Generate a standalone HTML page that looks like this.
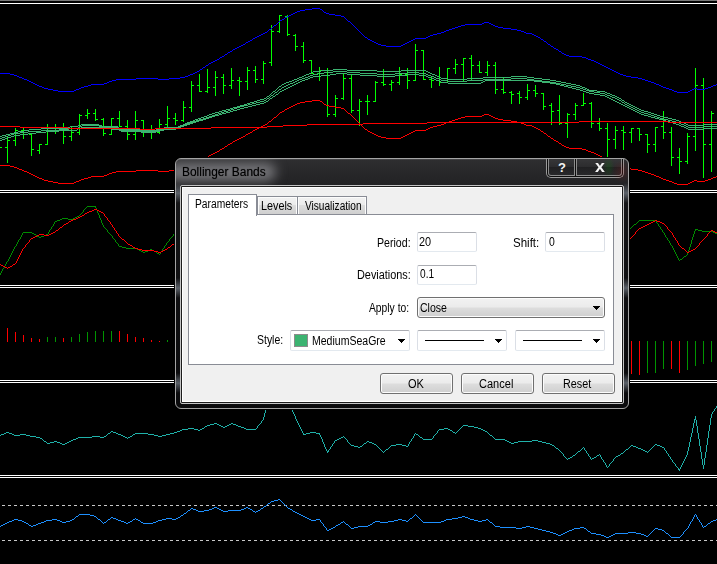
<!DOCTYPE html><html><head><meta charset="utf-8"><title>Bollinger Bands</title><style>
html,body{margin:0;padding:0;background:#000;}
body{width:717px;height:564px;position:relative;overflow:hidden;font-family:"Liberation Sans",sans-serif;}
.a{position:absolute;box-sizing:border-box;}
#chart{position:absolute;left:0;top:0;}
.t{position:absolute;line-height:20px;height:20px;white-space:nowrap;color:#000;transform-origin:0 0;}
.inp{position:absolute;box-sizing:border-box;background:#fff;border-radius:2px;border:1px solid #e3e9ef;border-top-color:#abadb3;border-left-color:#dbdfe6;border-right-color:#dbdfe6;}
.btn{position:absolute;box-sizing:border-box;border:1px solid #707070;border-radius:3px;background:linear-gradient(to bottom,#f2f2f2 0,#ebebeb 48%,#dddddd 52%,#cfcfcf 100%);box-shadow:inset 0 0 0 1px #fcfcfc;}
.tab{position:absolute;box-sizing:border-box;border:1px solid #898c95;border-bottom:none;background:linear-gradient(to bottom,#f2f2f2 0,#ebebeb 50%,#dddddd 50%,#cfcfcf 100%);box-shadow:inset 1px 1px 0 0 #fcfcfc, inset -1px 0 0 0 #fcfcfc;}
.arrow{position:absolute;width:0;height:0;border-left:3.5px solid transparent;border-right:3.5px solid transparent;border-top:4px solid #000;}
</style></head><body>
<svg id="chart" width="717" height="564" viewBox="0 0 717 564" shape-rendering="crispEdges">
<rect x="0" y="0" width="717" height="564" fill="#000"/>
<rect x="0" y="0" width="717" height="1" fill="#787878"/>
<rect x="0" y="3" width="717" height="1" fill="#fff"/>
<rect x="0" y="190" width="717" height="1" fill="#fff"/>
<rect x="0" y="192" width="717" height="1" fill="#fff"/>
<rect x="0" y="285" width="717" height="1" fill="#fff"/>
<rect x="0" y="287" width="717" height="1" fill="#fff"/>
<rect x="0" y="380" width="717" height="1" fill="#fff"/>
<rect x="0" y="382" width="717" height="1" fill="#fff"/>
<rect x="0" y="475" width="717" height="1" fill="#fff"/>
<rect x="0" y="477" width="717" height="1" fill="#fff"/>
<line x1="2" y1="505.5" x2="717" y2="505.5" stroke="#c8c8c8" stroke-width="1" stroke-dasharray="3 3"/>
<line x1="2" y1="540.5" x2="717" y2="540.5" stroke="#c8c8c8" stroke-width="1" stroke-dasharray="3 3"/>
<clipPath id="c1"><rect x="0" y="4" width="717" height="186"/></clipPath><g clip-path="url(#c1)">
<rect x="0" y="147" width="2" height="1" fill="#0f0"/><rect x="7" y="136" width="1" height="27" fill="#0f0"/><rect x="5" y="147" width="2" height="1" fill="#0f0"/><rect x="8" y="140" width="2" height="1" fill="#0f0"/><rect x="15" y="128" width="1" height="18" fill="#0f0"/><rect x="13" y="140" width="2" height="1" fill="#0f0"/><rect x="16" y="130" width="2" height="1" fill="#0f0"/><rect x="23" y="128" width="1" height="11" fill="#0f0"/><rect x="21" y="130" width="2" height="1" fill="#0f0"/><rect x="24" y="132" width="2" height="1" fill="#0f0"/><rect x="31" y="134" width="1" height="22" fill="#0f0"/><rect x="29" y="134" width="2" height="1" fill="#0f0"/><rect x="32" y="149" width="2" height="1" fill="#0f0"/><rect x="39" y="144" width="1" height="10" fill="#0f0"/><rect x="37" y="150" width="2" height="1" fill="#0f0"/><rect x="40" y="144" width="2" height="1" fill="#0f0"/><rect x="47" y="124" width="1" height="21" fill="#0f0"/><rect x="45" y="144" width="2" height="1" fill="#0f0"/><rect x="48" y="131" width="2" height="1" fill="#0f0"/><rect x="55" y="124" width="1" height="10" fill="#0f0"/><rect x="53" y="131" width="2" height="1" fill="#0f0"/><rect x="56" y="130" width="2" height="1" fill="#0f0"/><rect x="63" y="123" width="1" height="21" fill="#0f0"/><rect x="61" y="130" width="2" height="1" fill="#0f0"/><rect x="64" y="136" width="2" height="1" fill="#0f0"/><rect x="71" y="126" width="1" height="15" fill="#0f0"/><rect x="69" y="136" width="2" height="1" fill="#0f0"/><rect x="72" y="132" width="2" height="1" fill="#0f0"/><rect x="79" y="114" width="1" height="21" fill="#0f0"/><rect x="77" y="132" width="2" height="1" fill="#0f0"/><rect x="80" y="115" width="2" height="1" fill="#0f0"/><rect x="87" y="109" width="1" height="10" fill="#0f0"/><rect x="85" y="115" width="2" height="1" fill="#0f0"/><rect x="88" y="113" width="2" height="1" fill="#0f0"/><rect x="95" y="109" width="1" height="12" fill="#0f0"/><rect x="93" y="113" width="2" height="1" fill="#0f0"/><rect x="96" y="119" width="2" height="1" fill="#0f0"/><rect x="103" y="118" width="1" height="18" fill="#0f0"/><rect x="101" y="119" width="2" height="1" fill="#0f0"/><rect x="104" y="133" width="2" height="1" fill="#0f0"/><rect x="111" y="118" width="1" height="17" fill="#0f0"/><rect x="109" y="134" width="2" height="1" fill="#0f0"/><rect x="112" y="118" width="2" height="1" fill="#0f0"/><rect x="119" y="111" width="1" height="16" fill="#0f0"/><rect x="117" y="118" width="2" height="1" fill="#0f0"/><rect x="120" y="126" width="2" height="1" fill="#0f0"/><rect x="127" y="120" width="1" height="20" fill="#0f0"/><rect x="125" y="126" width="2" height="1" fill="#0f0"/><rect x="128" y="134" width="2" height="1" fill="#0f0"/><rect x="135" y="111" width="1" height="29" fill="#0f0"/><rect x="133" y="134" width="2" height="1" fill="#0f0"/><rect x="136" y="120" width="2" height="1" fill="#0f0"/><rect x="143" y="120" width="1" height="17" fill="#0f0"/><rect x="141" y="120" width="2" height="1" fill="#0f0"/><rect x="144" y="129" width="2" height="1" fill="#0f0"/><rect x="151" y="125" width="1" height="14" fill="#0f0"/><rect x="149" y="129" width="2" height="1" fill="#0f0"/><rect x="152" y="132" width="2" height="1" fill="#0f0"/><rect x="159" y="119" width="1" height="15" fill="#0f0"/><rect x="157" y="132" width="2" height="1" fill="#0f0"/><rect x="160" y="124" width="2" height="1" fill="#0f0"/><rect x="167" y="106" width="1" height="22" fill="#0f0"/><rect x="165" y="124" width="2" height="1" fill="#0f0"/><rect x="168" y="118" width="2" height="1" fill="#0f0"/><rect x="175" y="113" width="1" height="12" fill="#0f0"/><rect x="173" y="118" width="2" height="1" fill="#0f0"/><rect x="176" y="120" width="2" height="1" fill="#0f0"/><rect x="183" y="101" width="1" height="21" fill="#0f0"/><rect x="181" y="120" width="2" height="1" fill="#0f0"/><rect x="184" y="107" width="2" height="1" fill="#0f0"/><rect x="191" y="81" width="1" height="31" fill="#0f0"/><rect x="189" y="107" width="2" height="1" fill="#0f0"/><rect x="192" y="85" width="2" height="1" fill="#0f0"/><rect x="199" y="74" width="1" height="18" fill="#0f0"/><rect x="197" y="85" width="2" height="1" fill="#0f0"/><rect x="200" y="91" width="2" height="1" fill="#0f0"/><rect x="207" y="69" width="1" height="24" fill="#0f0"/><rect x="205" y="91" width="2" height="1" fill="#0f0"/><rect x="208" y="87" width="2" height="1" fill="#0f0"/><rect x="215" y="71" width="1" height="25" fill="#0f0"/><rect x="213" y="87" width="2" height="1" fill="#0f0"/><rect x="216" y="77" width="2" height="1" fill="#0f0"/><rect x="223" y="74" width="1" height="20" fill="#0f0"/><rect x="221" y="77" width="2" height="1" fill="#0f0"/><rect x="224" y="85" width="2" height="1" fill="#0f0"/><rect x="231" y="68" width="1" height="21" fill="#0f0"/><rect x="229" y="85" width="2" height="1" fill="#0f0"/><rect x="232" y="80" width="2" height="1" fill="#0f0"/><rect x="239" y="77" width="1" height="19" fill="#0f0"/><rect x="237" y="80" width="2" height="1" fill="#0f0"/><rect x="240" y="81" width="2" height="1" fill="#0f0"/><rect x="247" y="67" width="1" height="23" fill="#0f0"/><rect x="245" y="81" width="2" height="1" fill="#0f0"/><rect x="248" y="70" width="2" height="1" fill="#0f0"/><rect x="255" y="66" width="1" height="17" fill="#0f0"/><rect x="253" y="70" width="2" height="1" fill="#0f0"/><rect x="256" y="79" width="2" height="1" fill="#0f0"/><rect x="263" y="61" width="1" height="23" fill="#0f0"/><rect x="261" y="79" width="2" height="1" fill="#0f0"/><rect x="264" y="63" width="2" height="1" fill="#0f0"/><rect x="271" y="25" width="1" height="41" fill="#0f0"/><rect x="269" y="62" width="2" height="1" fill="#0f0"/><rect x="272" y="31" width="2" height="1" fill="#0f0"/><rect x="279" y="15" width="1" height="18" fill="#0f0"/><rect x="277" y="31" width="2" height="1" fill="#0f0"/><rect x="280" y="15" width="2" height="1" fill="#0f0"/><rect x="287" y="15" width="1" height="21" fill="#0f0"/><rect x="285" y="16" width="2" height="1" fill="#0f0"/><rect x="288" y="34" width="2" height="1" fill="#0f0"/><rect x="295" y="34" width="1" height="17" fill="#0f0"/><rect x="293" y="35" width="2" height="1" fill="#0f0"/><rect x="296" y="46" width="2" height="1" fill="#0f0"/><rect x="303" y="42" width="1" height="21" fill="#0f0"/><rect x="301" y="46" width="2" height="1" fill="#0f0"/><rect x="304" y="60" width="2" height="1" fill="#0f0"/><rect x="311" y="60" width="1" height="14" fill="#0f0"/><rect x="309" y="60" width="2" height="1" fill="#0f0"/><rect x="312" y="73" width="2" height="1" fill="#0f0"/><rect x="319" y="67" width="1" height="14" fill="#0f0"/><rect x="317" y="73" width="2" height="1" fill="#0f0"/><rect x="320" y="70" width="2" height="1" fill="#0f0"/><rect x="327" y="68" width="1" height="49" fill="#0f0"/><rect x="325" y="70" width="2" height="1" fill="#0f0"/><rect x="328" y="114" width="2" height="1" fill="#0f0"/><rect x="335" y="95" width="1" height="22" fill="#0f0"/><rect x="333" y="114" width="2" height="1" fill="#0f0"/><rect x="336" y="98" width="2" height="1" fill="#0f0"/><rect x="343" y="74" width="1" height="26" fill="#0f0"/><rect x="341" y="98" width="2" height="1" fill="#0f0"/><rect x="344" y="78" width="2" height="1" fill="#0f0"/><rect x="351" y="75" width="1" height="38" fill="#0f0"/><rect x="349" y="78" width="2" height="1" fill="#0f0"/><rect x="352" y="110" width="2" height="1" fill="#0f0"/><rect x="359" y="99" width="1" height="27" fill="#0f0"/><rect x="357" y="110" width="2" height="1" fill="#0f0"/><rect x="360" y="101" width="2" height="1" fill="#0f0"/><rect x="367" y="95" width="1" height="20" fill="#0f0"/><rect x="365" y="101" width="2" height="1" fill="#0f0"/><rect x="368" y="101" width="2" height="1" fill="#0f0"/><rect x="375" y="81" width="1" height="21" fill="#0f0"/><rect x="373" y="101" width="2" height="1" fill="#0f0"/><rect x="376" y="82" width="2" height="1" fill="#0f0"/><rect x="383" y="69" width="1" height="17" fill="#0f0"/><rect x="381" y="82" width="2" height="1" fill="#0f0"/><rect x="384" y="84" width="2" height="1" fill="#0f0"/><rect x="391" y="80" width="1" height="11" fill="#0f0"/><rect x="389" y="84" width="2" height="1" fill="#0f0"/><rect x="392" y="82" width="2" height="1" fill="#0f0"/><rect x="399" y="67" width="1" height="18" fill="#0f0"/><rect x="397" y="82" width="2" height="1" fill="#0f0"/><rect x="400" y="74" width="2" height="1" fill="#0f0"/><rect x="407" y="68" width="1" height="21" fill="#0f0"/><rect x="405" y="74" width="2" height="1" fill="#0f0"/><rect x="408" y="80" width="2" height="1" fill="#0f0"/><rect x="415" y="44" width="1" height="37" fill="#0f0"/><rect x="413" y="80" width="2" height="1" fill="#0f0"/><rect x="416" y="50" width="2" height="1" fill="#0f0"/><rect x="423" y="50" width="1" height="30" fill="#0f0"/><rect x="421" y="50" width="2" height="1" fill="#0f0"/><rect x="424" y="79" width="2" height="1" fill="#0f0"/><rect x="431" y="76" width="1" height="12" fill="#0f0"/><rect x="429" y="79" width="2" height="1" fill="#0f0"/><rect x="432" y="80" width="2" height="1" fill="#0f0"/><rect x="439" y="67" width="1" height="19" fill="#0f0"/><rect x="437" y="80" width="2" height="1" fill="#0f0"/><rect x="440" y="82" width="2" height="1" fill="#0f0"/><rect x="447" y="68" width="1" height="15" fill="#0f0"/><rect x="445" y="82" width="2" height="1" fill="#0f0"/><rect x="448" y="68" width="2" height="1" fill="#0f0"/><rect x="455" y="59" width="1" height="15" fill="#0f0"/><rect x="453" y="68" width="2" height="1" fill="#0f0"/><rect x="456" y="64" width="2" height="1" fill="#0f0"/><rect x="463" y="58" width="1" height="23" fill="#0f0"/><rect x="461" y="64" width="2" height="1" fill="#0f0"/><rect x="464" y="58" width="2" height="1" fill="#0f0"/><rect x="471" y="55" width="1" height="25" fill="#0f0"/><rect x="469" y="58" width="2" height="1" fill="#0f0"/><rect x="472" y="65" width="2" height="1" fill="#0f0"/><rect x="479" y="61" width="1" height="12" fill="#0f0"/><rect x="477" y="65" width="2" height="1" fill="#0f0"/><rect x="480" y="72" width="2" height="1" fill="#0f0"/><rect x="487" y="61" width="1" height="15" fill="#0f0"/><rect x="485" y="72" width="2" height="1" fill="#0f0"/><rect x="488" y="65" width="2" height="1" fill="#0f0"/><rect x="495" y="62" width="1" height="32" fill="#0f0"/><rect x="493" y="65" width="2" height="1" fill="#0f0"/><rect x="496" y="89" width="2" height="1" fill="#0f0"/><rect x="503" y="77" width="1" height="17" fill="#0f0"/><rect x="501" y="89" width="2" height="1" fill="#0f0"/><rect x="504" y="92" width="2" height="1" fill="#0f0"/><rect x="511" y="91" width="1" height="13" fill="#0f0"/><rect x="509" y="92" width="2" height="1" fill="#0f0"/><rect x="512" y="94" width="2" height="1" fill="#0f0"/><rect x="519" y="91" width="1" height="13" fill="#0f0"/><rect x="517" y="93" width="2" height="1" fill="#0f0"/><rect x="520" y="97" width="2" height="1" fill="#0f0"/><rect x="527" y="84" width="1" height="16" fill="#0f0"/><rect x="525" y="97" width="2" height="1" fill="#0f0"/><rect x="528" y="90" width="2" height="1" fill="#0f0"/><rect x="535" y="85" width="1" height="12" fill="#0f0"/><rect x="533" y="90" width="2" height="1" fill="#0f0"/><rect x="536" y="93" width="2" height="1" fill="#0f0"/><rect x="543" y="93" width="1" height="17" fill="#0f0"/><rect x="541" y="93" width="2" height="1" fill="#0f0"/><rect x="544" y="106" width="2" height="1" fill="#0f0"/><rect x="551" y="103" width="1" height="22" fill="#0f0"/><rect x="549" y="105" width="2" height="1" fill="#0f0"/><rect x="552" y="111" width="2" height="1" fill="#0f0"/><rect x="559" y="95" width="1" height="30" fill="#0f0"/><rect x="557" y="110" width="2" height="1" fill="#0f0"/><rect x="560" y="123" width="2" height="1" fill="#0f0"/><rect x="567" y="113" width="1" height="25" fill="#0f0"/><rect x="565" y="123" width="2" height="1" fill="#0f0"/><rect x="568" y="114" width="2" height="1" fill="#0f0"/><rect x="575" y="103" width="1" height="17" fill="#0f0"/><rect x="573" y="114" width="2" height="1" fill="#0f0"/><rect x="576" y="105" width="2" height="1" fill="#0f0"/><rect x="583" y="93" width="1" height="13" fill="#0f0"/><rect x="581" y="105" width="2" height="1" fill="#0f0"/><rect x="584" y="103" width="2" height="1" fill="#0f0"/><rect x="591" y="102" width="1" height="26" fill="#0f0"/><rect x="589" y="103" width="2" height="1" fill="#0f0"/><rect x="592" y="123" width="2" height="1" fill="#0f0"/><rect x="599" y="118" width="1" height="13" fill="#0f0"/><rect x="597" y="123" width="2" height="1" fill="#0f0"/><rect x="600" y="128" width="2" height="1" fill="#0f0"/><rect x="607" y="123" width="1" height="34" fill="#0f0"/><rect x="605" y="128" width="2" height="1" fill="#0f0"/><rect x="608" y="139" width="2" height="1" fill="#0f0"/><rect x="615" y="126" width="1" height="23" fill="#0f0"/><rect x="613" y="139" width="2" height="1" fill="#0f0"/><rect x="616" y="130" width="2" height="1" fill="#0f0"/><rect x="623" y="126" width="1" height="24" fill="#0f0"/><rect x="621" y="130" width="2" height="1" fill="#0f0"/><rect x="624" y="132" width="2" height="1" fill="#0f0"/><rect x="631" y="128" width="1" height="15" fill="#0f0"/><rect x="629" y="132" width="2" height="1" fill="#0f0"/><rect x="632" y="128" width="2" height="1" fill="#0f0"/><rect x="639" y="128" width="1" height="13" fill="#0f0"/><rect x="637" y="128" width="2" height="1" fill="#0f0"/><rect x="640" y="134" width="2" height="1" fill="#0f0"/><rect x="647" y="134" width="1" height="19" fill="#0f0"/><rect x="645" y="134" width="2" height="1" fill="#0f0"/><rect x="648" y="144" width="2" height="1" fill="#0f0"/><rect x="655" y="127" width="1" height="25" fill="#0f0"/><rect x="653" y="144" width="2" height="1" fill="#0f0"/><rect x="656" y="127" width="2" height="1" fill="#0f0"/><rect x="663" y="111" width="1" height="28" fill="#0f0"/><rect x="661" y="126" width="2" height="1" fill="#0f0"/><rect x="664" y="132" width="2" height="1" fill="#0f0"/><rect x="671" y="127" width="1" height="39" fill="#0f0"/><rect x="669" y="132" width="2" height="1" fill="#0f0"/><rect x="672" y="157" width="2" height="1" fill="#0f0"/><rect x="679" y="148" width="1" height="26" fill="#0f0"/><rect x="677" y="157" width="2" height="1" fill="#0f0"/><rect x="680" y="161" width="2" height="1" fill="#0f0"/><rect x="687" y="133" width="1" height="31" fill="#0f0"/><rect x="685" y="161" width="2" height="1" fill="#0f0"/><rect x="688" y="136" width="2" height="1" fill="#0f0"/><rect x="695" y="68" width="1" height="83" fill="#0f0"/><rect x="693" y="136" width="2" height="1" fill="#0f0"/><rect x="696" y="85" width="2" height="1" fill="#0f0"/><rect x="703" y="78" width="1" height="100" fill="#0f0"/><rect x="701" y="85" width="2" height="1" fill="#0f0"/><rect x="704" y="144" width="2" height="1" fill="#0f0"/><rect x="711" y="111" width="1" height="61" fill="#0f0"/><rect x="709" y="144" width="2" height="1" fill="#0f0"/><rect x="712" y="113" width="2" height="1" fill="#0f0"/>
<path d="M333 69h14v1h-14zM321 70h12v1h-12zM347 70h30v1h-30zM401 70h25v1h-25zM313 71h8v1h-8zM377 71h24v1h-24zM426 71h2v1h-2zM311 72h2v1h-2zM428 72h2v1h-2zM309 73h2v1h-2zM430 73h2v1h-2zM306 74h3v1h-3zM432 74h3v1h-3zM304 75h2v1h-2zM435 75h2v1h-2zM302 76h2v1h-2zM437 76h2v1h-2zM511 76h16v1h-16zM299 77h3v1h-3zM439 77h2v1h-2zM483 77h28v1h-28zM527 77h7v1h-7zM297 78h2v1h-2zM441 78h7v1h-7zM467 78h16v1h-16zM534 78h8v1h-8zM294 79h3v1h-3zM448 79h19v1h-19zM542 79h8v1h-8zM292 80h2v1h-2zM550 80h6v1h-6zM289 81h3v1h-3zM556 81h5v1h-5zM286 82h3v1h-3zM561 82h5v1h-5zM284 83h2v1h-2zM566 83h5v1h-5zM282 84h2v1h-2zM571 84h5v1h-5zM281 85h1v1h-1zM576 85h4v1h-4zM279 86h2v1h-2zM580 86h2v1h-2zM278 87h1v1h-1zM582 87h3v1h-3zM277 88h1v1h-1zM585 88h2v1h-2zM276 89h1v1h-1zM587 89h2v1h-2zM275 90h1v1h-1zM589 90h8v1h-8zM273 91h2v1h-2zM597 91h8v1h-8zM272 92h1v1h-1zM605 92h2v1h-2zM271 93h1v1h-1zM607 93h3v1h-3zM270 94h1v1h-1zM610 94h2v1h-2zM269 95h1v1h-1zM612 95h3v1h-3zM267 96h2v1h-2zM615 96h2v1h-2zM266 97h1v1h-1zM617 97h2v1h-2zM264 98h2v1h-2zM619 98h2v1h-2zM260 99h4v1h-4zM621 99h1v1h-1zM257 100h3v1h-3zM622 100h2v1h-2zM254 101h3v1h-3zM624 101h1v1h-1zM250 102h4v1h-4zM625 102h2v1h-2zM247 103h3v1h-3zM627 103h2v1h-2zM244 104h3v1h-3zM629 104h2v1h-2zM240 105h4v1h-4zM631 105h2v1h-2zM237 106h3v1h-3zM633 106h2v1h-2zM233 107h4v1h-4zM635 107h2v1h-2zM230 108h3v1h-3zM637 108h2v1h-2zM226 109h4v1h-4zM639 109h2v1h-2zM222 110h4v1h-4zM641 110h3v1h-3zM219 111h3v1h-3zM644 111h4v1h-4zM215 112h4v1h-4zM648 112h3v1h-3zM212 113h3v1h-3zM651 113h3v1h-3zM209 114h3v1h-3zM654 114h3v1h-3zM207 115h2v1h-2zM657 115h3v1h-3zM204 116h3v1h-3zM660 116h4v1h-4zM201 117h3v1h-3zM664 117h4v1h-4zM198 118h3v1h-3zM668 118h4v1h-4zM195 119h3v1h-3zM672 119h4v1h-4zM193 120h2v1h-2zM676 120h3v1h-3zM190 121h3v1h-3zM679 121h2v1h-2zM187 122h3v1h-3zM681 122h3v1h-3zM185 123h2v1h-2zM684 123h2v1h-2zM81 124h18v1h-18zM183 124h2v1h-2zM686 124h2v1h-2zM704 124h13v1h-13zM78 125h3v1h-3zM99 125h3v1h-3zM180 125h3v1h-3zM688 125h16v1h-16zM70 126h8v1h-8zM102 126h16v1h-16zM178 126h2v1h-2zM68 127h2v1h-2zM118 127h1v1h-1zM164 127h14v1h-14zM41 128h27v1h-27zM119 128h2v1h-2zM160 128h4v1h-4zM29 129h12v1h-12zM121 129h20v1h-20zM156 129h4v1h-4zM24 130h5v1h-5zM141 130h15v1h-15zM18 131h6v1h-6zM14 132h4v1h-4zM10 133h4v1h-4zM6 134h4v1h-4zM2 135h4v1h-4zM0 136h2v1h-2z" fill="#3cb371"/>
<path d="M333 71h14v1h-14zM324 72h9v1h-9zM347 72h13v1h-13zM407 72h12v1h-12zM318 73h6v1h-6zM360 73h17v1h-17zM395 73h12v1h-12zM419 73h7v1h-7zM313 74h5v1h-5zM377 74h18v1h-18zM426 74h2v1h-2zM310 75h3v1h-3zM428 75h3v1h-3zM308 76h2v1h-2zM431 76h3v1h-3zM305 77h3v1h-3zM434 77h2v1h-2zM302 78h3v1h-3zM436 78h3v1h-3zM511 78h16v1h-16zM299 79h3v1h-3zM439 79h2v1h-2zM483 79h28v1h-28zM527 79h7v1h-7zM297 80h2v1h-2zM441 80h7v1h-7zM467 80h16v1h-16zM534 80h8v1h-8zM295 81h2v1h-2zM448 81h19v1h-19zM542 81h8v1h-8zM293 82h2v1h-2zM550 82h6v1h-6zM290 83h3v1h-3zM556 83h5v1h-5zM288 84h2v1h-2zM561 84h5v1h-5zM286 85h2v1h-2zM566 85h5v1h-5zM284 86h2v1h-2zM571 86h5v1h-5zM282 87h2v1h-2zM576 87h4v1h-4zM281 88h1v1h-1zM580 88h3v1h-3zM279 89h2v1h-2zM583 89h3v1h-3zM278 90h1v1h-1zM586 90h3v1h-3zM277 91h1v1h-1zM589 91h5v1h-5zM275 92h2v1h-2zM594 92h6v1h-6zM274 93h1v1h-1zM600 93h5v1h-5zM273 94h1v1h-1zM605 94h2v1h-2zM271 95h2v1h-2zM607 95h3v1h-3zM270 96h1v1h-1zM610 96h2v1h-2zM269 97h1v1h-1zM612 97h3v1h-3zM267 98h2v1h-2zM615 98h2v1h-2zM266 99h1v1h-1zM617 99h2v1h-2zM264 100h2v1h-2zM619 100h2v1h-2zM260 101h4v1h-4zM621 101h1v1h-1zM256 102h4v1h-4zM622 102h2v1h-2zM252 103h4v1h-4zM624 103h1v1h-1zM248 104h4v1h-4zM625 104h2v1h-2zM244 105h4v1h-4zM627 105h2v1h-2zM240 106h4v1h-4zM629 106h2v1h-2zM237 107h3v1h-3zM631 107h2v1h-2zM234 108h3v1h-3zM633 108h2v1h-2zM231 109h3v1h-3zM635 109h2v1h-2zM228 110h3v1h-3zM637 110h2v1h-2zM224 111h4v1h-4zM639 111h2v1h-2zM221 112h3v1h-3zM641 112h3v1h-3zM218 113h3v1h-3zM644 113h4v1h-4zM215 114h3v1h-3zM648 114h3v1h-3zM212 115h3v1h-3zM651 115h3v1h-3zM209 116h3v1h-3zM654 116h3v1h-3zM206 117h3v1h-3zM657 117h3v1h-3zM203 118h3v1h-3zM660 118h4v1h-4zM199 119h4v1h-4zM664 119h4v1h-4zM196 120h3v1h-3zM668 120h4v1h-4zM193 121h3v1h-3zM672 121h4v1h-4zM190 122h3v1h-3zM676 122h3v1h-3zM187 123h3v1h-3zM679 123h2v1h-2zM184 124h3v1h-3zM681 124h3v1h-3zM82 125h17v1h-17zM181 125h3v1h-3zM684 125h2v1h-2zM80 126h2v1h-2zM99 126h3v1h-3zM178 126h3v1h-3zM686 126h2v1h-2zM704 126h13v1h-13zM78 127h2v1h-2zM102 127h16v1h-16zM176 127h2v1h-2zM688 127h16v1h-16zM69 128h9v1h-9zM118 128h1v1h-1zM164 128h12v1h-12zM59 129h10v1h-10zM119 129h2v1h-2zM160 129h4v1h-4zM41 130h18v1h-18zM121 130h20v1h-20zM156 130h4v1h-4zM28 131h13v1h-13zM141 131h15v1h-15zM20 132h8v1h-8zM14 133h6v1h-6zM11 134h3v1h-3zM8 135h3v1h-3zM5 136h3v1h-3zM2 137h3v1h-3zM0 138h2v1h-2z" fill="#3cb371"/>
<path d="M336 73h11v1h-11zM330 74h6v1h-6zM347 74h13v1h-13zM407 74h12v1h-12zM321 75h9v1h-9zM360 75h17v1h-17zM395 75h12v1h-12zM419 75h7v1h-7zM313 76h8v1h-8zM377 76h18v1h-18zM426 76h2v1h-2zM310 77h3v1h-3zM428 77h3v1h-3zM308 78h2v1h-2zM431 78h3v1h-3zM305 79h3v1h-3zM434 79h2v1h-2zM302 80h3v1h-3zM436 80h3v1h-3zM485 80h49v1h-49zM300 81h2v1h-2zM439 81h2v1h-2zM483 81h2v1h-2zM534 81h8v1h-8zM298 82h2v1h-2zM441 82h7v1h-7zM481 82h2v1h-2zM542 82h8v1h-8zM296 83h2v1h-2zM448 83h33v1h-33zM550 83h6v1h-6zM294 84h2v1h-2zM556 84h4v1h-4zM292 85h2v1h-2zM560 85h4v1h-4zM290 86h2v1h-2zM564 86h4v1h-4zM288 87h2v1h-2zM568 87h4v1h-4zM286 88h2v1h-2zM572 88h4v1h-4zM284 89h2v1h-2zM576 89h4v1h-4zM282 90h2v1h-2zM580 90h3v1h-3zM280 91h2v1h-2zM583 91h3v1h-3zM279 92h1v1h-1zM586 92h3v1h-3zM278 93h1v1h-1zM589 93h5v1h-5zM276 94h2v1h-2zM594 94h6v1h-6zM275 95h1v1h-1zM600 95h5v1h-5zM273 96h2v1h-2zM605 96h2v1h-2zM272 97h1v1h-1zM607 97h2v1h-2zM270 98h2v1h-2zM609 98h2v1h-2zM269 99h1v1h-1zM611 99h2v1h-2zM268 100h1v1h-1zM613 100h2v1h-2zM266 101h2v1h-2zM615 101h2v1h-2zM264 102h2v1h-2zM617 102h2v1h-2zM260 103h4v1h-4zM619 103h2v1h-2zM256 104h4v1h-4zM621 104h2v1h-2zM252 105h4v1h-4zM623 105h2v1h-2zM248 106h4v1h-4zM625 106h2v1h-2zM244 107h4v1h-4zM627 107h2v1h-2zM240 108h4v1h-4zM629 108h2v1h-2zM237 109h3v1h-3zM631 109h2v1h-2zM233 110h4v1h-4zM633 110h2v1h-2zM230 111h3v1h-3zM635 111h2v1h-2zM226 112h4v1h-4zM637 112h2v1h-2zM222 113h4v1h-4zM639 113h2v1h-2zM219 114h3v1h-3zM641 114h3v1h-3zM215 115h4v1h-4zM644 115h4v1h-4zM212 116h3v1h-3zM648 116h3v1h-3zM209 117h3v1h-3zM651 117h4v1h-4zM206 118h3v1h-3zM655 118h4v1h-4zM203 119h3v1h-3zM659 119h4v1h-4zM199 120h4v1h-4zM663 120h3v1h-3zM196 121h3v1h-3zM666 121h4v1h-4zM193 122h3v1h-3zM670 122h3v1h-3zM190 123h3v1h-3zM673 123h3v1h-3zM187 124h3v1h-3zM676 124h3v1h-3zM184 125h3v1h-3zM679 125h2v1h-2zM181 126h3v1h-3zM681 126h3v1h-3zM81 127h21v1h-21zM178 127h3v1h-3zM684 127h2v1h-2zM78 128h3v1h-3zM102 128h9v1h-9zM176 128h2v1h-2zM686 128h2v1h-2zM704 128h13v1h-13zM77 129h1v1h-1zM111 129h8v1h-8zM164 129h12v1h-12zM688 129h16v1h-16zM59 130h18v1h-18zM119 130h2v1h-2zM160 130h4v1h-4zM46 131h13v1h-13zM121 131h20v1h-20zM156 131h4v1h-4zM36 132h10v1h-10zM141 132h15v1h-15zM28 133h8v1h-8zM20 134h8v1h-8zM14 135h6v1h-6zM11 136h3v1h-3zM8 137h3v1h-3zM5 138h3v1h-3zM2 139h3v1h-3zM0 140h2v1h-2z" fill="#3cb371"/>
<path d="M312 8h8v1h-8zM305 9h7v1h-7zM320 9h2v1h-2zM300 10h5v1h-5zM322 10h1v1h-1zM297 11h3v1h-3zM323 11h1v1h-1zM295 12h2v1h-2zM324 12h2v1h-2zM293 13h2v1h-2zM326 13h3v1h-3zM291 14h2v1h-2zM329 14h6v1h-6zM289 15h2v1h-2zM335 15h6v1h-6zM287 16h2v1h-2zM341 16h3v1h-3zM285 17h2v1h-2zM344 17h1v1h-1zM284 18h1v1h-1zM345 18h1v1h-1zM282 19h2v1h-2zM346 19h1v1h-1zM280 20h2v1h-2zM347 20h1v1h-1zM279 21h1v1h-1zM348 21h2v1h-2zM278 22h1v1h-1zM350 22h1v1h-1zM484 22h5v1h-5zM277 23h1v1h-1zM351 23h1v1h-1zM482 23h2v1h-2zM489 23h2v1h-2zM276 24h1v1h-1zM352 24h1v1h-1zM465 24h17v1h-17zM491 24h2v1h-2zM274 25h2v1h-2zM353 25h1v1h-1zM461 25h4v1h-4zM493 25h2v1h-2zM273 26h1v1h-1zM354 26h1v1h-1zM458 26h3v1h-3zM495 26h3v1h-3zM272 27h1v1h-1zM355 27h1v1h-1zM455 27h3v1h-3zM498 27h5v1h-5zM271 28h1v1h-1zM356 28h1v1h-1zM452 28h3v1h-3zM503 28h8v1h-8zM269 29h2v1h-2zM357 29h1v1h-1zM449 29h3v1h-3zM511 29h6v1h-6zM268 30h1v1h-1zM358 30h1v1h-1zM446 30h3v1h-3zM517 30h4v1h-4zM267 31h1v1h-1zM359 31h1v1h-1zM444 31h2v1h-2zM521 31h3v1h-3zM265 32h2v1h-2zM360 32h1v1h-1zM441 32h3v1h-3zM524 32h2v1h-2zM263 33h2v1h-2zM361 33h1v1h-1zM437 33h4v1h-4zM526 33h6v1h-6zM261 34h2v1h-2zM362 34h1v1h-1zM433 34h4v1h-4zM532 34h2v1h-2zM259 35h2v1h-2zM363 35h1v1h-1zM430 35h3v1h-3zM534 35h2v1h-2zM257 36h2v1h-2zM364 36h1v1h-1zM428 36h2v1h-2zM536 36h2v1h-2zM255 37h2v1h-2zM365 37h2v1h-2zM426 37h2v1h-2zM538 37h2v1h-2zM253 38h2v1h-2zM367 38h1v1h-1zM415 38h11v1h-11zM540 38h1v1h-1zM252 39h1v1h-1zM368 39h2v1h-2zM413 39h2v1h-2zM541 39h2v1h-2zM250 40h2v1h-2zM370 40h2v1h-2zM411 40h2v1h-2zM543 40h1v1h-1zM248 41h2v1h-2zM372 41h2v1h-2zM409 41h2v1h-2zM544 41h2v1h-2zM246 42h2v1h-2zM374 42h2v1h-2zM407 42h2v1h-2zM546 42h1v1h-1zM245 43h1v1h-1zM376 43h2v1h-2zM405 43h2v1h-2zM547 43h1v1h-1zM243 44h2v1h-2zM378 44h3v1h-3zM403 44h2v1h-2zM548 44h2v1h-2zM241 45h2v1h-2zM381 45h5v1h-5zM401 45h2v1h-2zM550 45h1v1h-1zM239 46h2v1h-2zM386 46h15v1h-15zM551 46h2v1h-2zM237 47h2v1h-2zM553 47h1v1h-1zM235 48h2v1h-2zM554 48h2v1h-2zM233 49h2v1h-2zM556 49h2v1h-2zM232 50h1v1h-1zM558 50h1v1h-1zM230 51h2v1h-2zM559 51h2v1h-2zM228 52h2v1h-2zM561 52h1v1h-1zM227 53h1v1h-1zM562 53h2v1h-2zM225 54h2v1h-2zM564 54h2v1h-2zM224 55h1v1h-1zM566 55h3v1h-3zM222 56h2v1h-2zM569 56h13v1h-13zM220 57h2v1h-2zM582 57h4v1h-4zM219 58h1v1h-1zM586 58h2v1h-2zM217 59h2v1h-2zM588 59h3v1h-3zM215 60h2v1h-2zM591 60h3v1h-3zM213 61h2v1h-2zM594 61h2v1h-2zM211 62h2v1h-2zM596 62h2v1h-2zM209 63h2v1h-2zM598 63h2v1h-2zM208 64h1v1h-1zM600 64h2v1h-2zM206 65h2v1h-2zM602 65h2v1h-2zM205 66h1v1h-1zM604 66h2v1h-2zM203 67h2v1h-2zM606 67h2v1h-2zM202 68h1v1h-1zM608 68h2v1h-2zM200 69h2v1h-2zM610 69h2v1h-2zM199 70h1v1h-1zM612 70h2v1h-2zM197 71h2v1h-2zM614 71h2v1h-2zM195 72h2v1h-2zM616 72h2v1h-2zM0 73h10v1h-10zM193 73h2v1h-2zM618 73h2v1h-2zM10 74h4v1h-4zM190 74h3v1h-3zM620 74h3v1h-3zM14 75h3v1h-3zM188 75h2v1h-2zM623 75h3v1h-3zM17 76h2v1h-2zM185 76h3v1h-3zM626 76h5v1h-5zM19 77h3v1h-3zM180 77h5v1h-5zM631 77h7v1h-7zM22 78h2v1h-2zM136 78h22v1h-22zM169 78h11v1h-11zM638 78h4v1h-4zM24 79h3v1h-3zM116 79h20v1h-20zM158 79h11v1h-11zM642 79h3v1h-3zM27 80h2v1h-2zM112 80h4v1h-4zM645 80h3v1h-3zM29 81h2v1h-2zM109 81h3v1h-3zM648 81h3v1h-3zM31 82h2v1h-2zM107 82h2v1h-2zM651 82h3v1h-3zM33 83h2v1h-2zM104 83h3v1h-3zM654 83h2v1h-2zM35 84h2v1h-2zM91 84h13v1h-13zM656 84h3v1h-3zM716 84h1v1h-1zM37 85h2v1h-2zM88 85h3v1h-3zM659 85h2v1h-2zM713 85h3v1h-3zM39 86h3v1h-3zM84 86h4v1h-4zM661 86h2v1h-2zM711 86h2v1h-2zM42 87h2v1h-2zM81 87h3v1h-3zM663 87h3v1h-3zM708 87h3v1h-3zM44 88h4v1h-4zM79 88h2v1h-2zM666 88h3v1h-3zM694 88h3v1h-3zM705 88h3v1h-3zM48 89h5v1h-5zM76 89h3v1h-3zM669 89h3v1h-3zM692 89h2v1h-2zM697 89h8v1h-8zM53 90h5v1h-5zM74 90h2v1h-2zM672 90h2v1h-2zM690 90h2v1h-2zM58 91h16v1h-16zM674 91h3v1h-3zM688 91h2v1h-2zM677 92h11v1h-11z" fill="#0000ff"/>
<path d="M312 100h8v1h-8zM305 101h7v1h-7zM320 101h2v1h-2zM300 102h5v1h-5zM322 102h1v1h-1zM297 103h3v1h-3zM323 103h1v1h-1zM295 104h2v1h-2zM324 104h2v1h-2zM293 105h2v1h-2zM326 105h3v1h-3zM291 106h2v1h-2zM329 106h6v1h-6zM289 107h2v1h-2zM335 107h6v1h-6zM287 108h2v1h-2zM341 108h3v1h-3zM285 109h2v1h-2zM344 109h1v1h-1zM284 110h1v1h-1zM345 110h1v1h-1zM282 111h2v1h-2zM346 111h1v1h-1zM280 112h2v1h-2zM347 112h1v1h-1zM279 113h1v1h-1zM348 113h2v1h-2zM278 114h1v1h-1zM350 114h1v1h-1zM484 114h5v1h-5zM277 115h1v1h-1zM351 115h1v1h-1zM482 115h2v1h-2zM489 115h2v1h-2zM276 116h1v1h-1zM352 116h1v1h-1zM465 116h17v1h-17zM491 116h2v1h-2zM274 117h2v1h-2zM353 117h1v1h-1zM461 117h4v1h-4zM493 117h2v1h-2zM273 118h1v1h-1zM354 118h1v1h-1zM458 118h3v1h-3zM495 118h3v1h-3zM272 119h1v1h-1zM355 119h1v1h-1zM455 119h3v1h-3zM498 119h5v1h-5zM271 120h1v1h-1zM356 120h1v1h-1zM452 120h3v1h-3zM503 120h8v1h-8zM269 121h2v1h-2zM357 121h1v1h-1zM449 121h3v1h-3zM511 121h6v1h-6zM268 122h1v1h-1zM358 122h1v1h-1zM446 122h3v1h-3zM517 122h4v1h-4zM267 123h1v1h-1zM359 123h1v1h-1zM444 123h2v1h-2zM521 123h3v1h-3zM265 124h2v1h-2zM360 124h1v1h-1zM441 124h3v1h-3zM524 124h2v1h-2zM263 125h2v1h-2zM361 125h1v1h-1zM437 125h4v1h-4zM526 125h6v1h-6zM261 126h2v1h-2zM362 126h1v1h-1zM433 126h4v1h-4zM532 126h2v1h-2zM259 127h2v1h-2zM363 127h1v1h-1zM430 127h3v1h-3zM534 127h2v1h-2zM257 128h2v1h-2zM364 128h1v1h-1zM428 128h2v1h-2zM536 128h2v1h-2zM255 129h2v1h-2zM365 129h2v1h-2zM426 129h2v1h-2zM538 129h2v1h-2zM253 130h2v1h-2zM367 130h1v1h-1zM415 130h11v1h-11zM540 130h1v1h-1zM252 131h1v1h-1zM368 131h2v1h-2zM413 131h2v1h-2zM541 131h2v1h-2zM250 132h2v1h-2zM370 132h2v1h-2zM411 132h2v1h-2zM543 132h1v1h-1zM248 133h2v1h-2zM372 133h2v1h-2zM409 133h2v1h-2zM544 133h2v1h-2zM246 134h2v1h-2zM374 134h2v1h-2zM407 134h2v1h-2zM546 134h1v1h-1zM245 135h1v1h-1zM376 135h2v1h-2zM405 135h2v1h-2zM547 135h1v1h-1zM243 136h2v1h-2zM378 136h3v1h-3zM403 136h2v1h-2zM548 136h2v1h-2zM241 137h2v1h-2zM381 137h5v1h-5zM401 137h2v1h-2zM550 137h1v1h-1zM239 138h2v1h-2zM386 138h15v1h-15zM551 138h2v1h-2zM237 139h2v1h-2zM553 139h1v1h-1zM235 140h2v1h-2zM554 140h2v1h-2zM233 141h2v1h-2zM556 141h2v1h-2zM232 142h1v1h-1zM558 142h1v1h-1zM230 143h2v1h-2zM559 143h2v1h-2zM228 144h2v1h-2zM561 144h1v1h-1zM227 145h1v1h-1zM562 145h2v1h-2zM225 146h2v1h-2zM564 146h2v1h-2zM224 147h1v1h-1zM566 147h3v1h-3zM222 148h2v1h-2zM569 148h13v1h-13zM220 149h2v1h-2zM582 149h4v1h-4zM219 150h1v1h-1zM586 150h2v1h-2zM217 151h2v1h-2zM588 151h3v1h-3zM215 152h2v1h-2zM591 152h3v1h-3zM213 153h2v1h-2zM594 153h2v1h-2zM211 154h2v1h-2zM596 154h2v1h-2zM209 155h2v1h-2zM598 155h2v1h-2zM208 156h1v1h-1zM600 156h2v1h-2zM206 157h2v1h-2zM602 157h2v1h-2zM205 158h1v1h-1zM604 158h2v1h-2zM203 159h2v1h-2zM606 159h2v1h-2zM202 160h1v1h-1zM608 160h2v1h-2zM200 161h2v1h-2zM610 161h2v1h-2zM199 162h1v1h-1zM612 162h2v1h-2zM197 163h2v1h-2zM614 163h2v1h-2zM195 164h2v1h-2zM616 164h2v1h-2zM0 165h10v1h-10zM193 165h2v1h-2zM618 165h2v1h-2zM10 166h4v1h-4zM190 166h3v1h-3zM620 166h3v1h-3zM14 167h3v1h-3zM188 167h2v1h-2zM623 167h3v1h-3zM17 168h2v1h-2zM185 168h3v1h-3zM626 168h5v1h-5zM19 169h3v1h-3zM180 169h5v1h-5zM631 169h7v1h-7zM22 170h2v1h-2zM136 170h22v1h-22zM169 170h11v1h-11zM638 170h4v1h-4zM24 171h3v1h-3zM116 171h20v1h-20zM158 171h11v1h-11zM642 171h3v1h-3zM27 172h2v1h-2zM112 172h4v1h-4zM645 172h3v1h-3zM29 173h2v1h-2zM109 173h3v1h-3zM648 173h3v1h-3zM31 174h2v1h-2zM107 174h2v1h-2zM651 174h3v1h-3zM33 175h2v1h-2zM104 175h3v1h-3zM654 175h2v1h-2zM35 176h2v1h-2zM91 176h13v1h-13zM656 176h3v1h-3zM716 176h1v1h-1zM37 177h2v1h-2zM88 177h3v1h-3zM659 177h2v1h-2zM713 177h3v1h-3zM39 178h3v1h-3zM84 178h4v1h-4zM661 178h2v1h-2zM711 178h2v1h-2zM42 179h2v1h-2zM81 179h3v1h-3zM663 179h3v1h-3zM708 179h3v1h-3zM44 180h4v1h-4zM79 180h2v1h-2zM666 180h3v1h-3zM694 180h3v1h-3zM705 180h3v1h-3zM48 181h5v1h-5zM76 181h3v1h-3zM669 181h3v1h-3zM692 181h2v1h-2zM697 181h8v1h-8zM53 182h5v1h-5zM74 182h2v1h-2zM672 182h2v1h-2zM690 182h2v1h-2zM58 183h16v1h-16zM674 183h3v1h-3zM688 183h2v1h-2zM677 184h11v1h-11z" fill="#ff0000"/>
<rect x="0" y="126" width="20" height="1" fill="#ff0000"/>
<rect x="20" y="127" width="48" height="1" fill="#ff0000"/>
<rect x="68" y="128" width="72" height="1" fill="#ff0000"/>
<rect x="140" y="129" width="15" height="1" fill="#ff0000"/>
<rect x="155" y="128" width="56" height="1" fill="#ff0000"/>
<rect x="211" y="127" width="56" height="1" fill="#ff0000"/>
<rect x="267" y="126" width="16" height="1" fill="#ff0000"/>
<rect x="283" y="125" width="24" height="1" fill="#ff0000"/>
<rect x="307" y="124" width="56" height="1" fill="#ff0000"/>
<rect x="363" y="123" width="64" height="1" fill="#ff0000"/>
<rect x="427" y="122" width="152" height="1" fill="#ff0000"/>
<rect x="579" y="121" width="89" height="1" fill="#ff0000"/>
<rect x="668" y="122" width="49" height="1" fill="#ff0000"/>
</g>
<path d="M87 206h9v1h-9zM86 207h1v1h-1zM95 207h1v1h-1zM85 208h1v1h-1zM96 208h1v1h-1zM84 209h1v1h-1zM96 209h1v1h-1zM83 210h1v1h-1zM97 210h1v1h-1zM83 211h1v1h-1zM97 211h1v1h-1zM82 212h1v1h-1zM97 212h1v1h-1zM81 213h1v1h-1zM98 213h1v1h-1zM80 214h1v1h-1zM98 214h1v1h-1zM79 215h1v1h-1zM99 215h1v1h-1zM77 216h2v1h-2zM99 216h1v1h-1zM75 217h2v1h-2zM99 217h1v1h-1zM62 218h6v1h-6zM73 218h2v1h-2zM100 218h1v1h-1zM60 219h2v1h-2zM68 219h5v1h-5zM100 219h1v1h-1zM57 220h3v1h-3zM101 220h1v1h-1zM55 221h2v1h-2zM101 221h1v1h-1zM54 222h1v1h-1zM101 222h1v1h-1zM54 223h1v1h-1zM102 223h1v1h-1zM53 224h1v1h-1zM102 224h1v1h-1zM53 225h1v1h-1zM103 225h1v1h-1zM52 226h1v1h-1zM103 226h1v1h-1zM51 227h1v1h-1zM104 227h1v1h-1zM51 228h1v1h-1zM105 228h1v1h-1zM50 229h1v1h-1zM106 229h1v1h-1zM49 230h1v1h-1zM107 230h1v1h-1zM49 231h1v1h-1zM107 231h1v1h-1zM23 232h9v1h-9zM48 232h1v1h-1zM108 232h1v1h-1zM175 232h1v1h-1zM22 233h1v1h-1zM32 233h2v1h-2zM48 233h1v1h-1zM109 233h1v1h-1zM174 233h1v1h-1zM22 234h1v1h-1zM34 234h2v1h-2zM46 234h2v1h-2zM110 234h1v1h-1zM173 234h1v1h-1zM21 235h1v1h-1zM36 235h1v1h-1zM44 235h2v1h-2zM111 235h1v1h-1zM173 235h1v1h-1zM21 236h1v1h-1zM37 236h2v1h-2zM41 236h3v1h-3zM112 236h1v1h-1zM172 236h1v1h-1zM20 237h1v1h-1zM39 237h2v1h-2zM112 237h1v1h-1zM171 237h1v1h-1zM20 238h1v1h-1zM113 238h1v1h-1zM170 238h1v1h-1zM19 239h1v1h-1zM114 239h1v1h-1zM169 239h1v1h-1zM18 240h1v1h-1zM115 240h1v1h-1zM169 240h1v1h-1zM18 241h1v1h-1zM115 241h1v1h-1zM168 241h1v1h-1zM17 242h1v1h-1zM116 242h1v1h-1zM167 242h1v1h-1zM17 243h1v1h-1zM117 243h1v1h-1zM166 243h1v1h-1zM16 244h1v1h-1zM118 244h1v1h-1zM166 244h1v1h-1zM16 245h1v1h-1zM118 245h1v1h-1zM165 245h1v1h-1zM15 246h1v1h-1zM119 246h3v1h-3zM164 246h1v1h-1zM14 247h1v1h-1zM122 247h4v1h-4zM164 247h1v1h-1zM14 248h1v1h-1zM126 248h11v1h-11zM163 248h1v1h-1zM13 249h1v1h-1zM137 249h2v1h-2zM150 249h2v1h-2zM162 249h1v1h-1zM13 250h1v1h-1zM139 250h2v1h-2zM148 250h2v1h-2zM152 250h2v1h-2zM162 250h1v1h-1zM12 251h1v1h-1zM141 251h2v1h-2zM145 251h3v1h-3zM154 251h2v1h-2zM161 251h1v1h-1zM12 252h1v1h-1zM143 252h2v1h-2zM156 252h1v1h-1zM160 252h1v1h-1zM11 253h1v1h-1zM157 253h2v1h-2zM160 253h1v1h-1zM11 254h1v1h-1zM159 254h1v1h-1zM10 255h1v1h-1zM10 256h1v1h-1zM9 257h1v1h-1zM9 258h1v1h-1zM8 259h1v1h-1zM8 260h1v1h-1zM7 261h1v1h-1zM6 262h1v1h-1zM6 263h1v1h-1zM5 264h1v1h-1zM5 265h1v1h-1zM4 266h1v1h-1zM4 267h1v1h-1zM3 268h1v1h-1zM2 269h1v1h-1zM2 270h1v1h-1zM1 271h1v1h-1zM1 272h1v1h-1zM0 273h1v1h-1zM0 274h1v1h-1z" fill="#008c00"/>
<path d="M94 209h3v1h-3zM92 210h2v1h-2zM97 210h2v1h-2zM89 211h3v1h-3zM99 211h2v1h-2zM87 212h2v1h-2zM101 212h2v1h-2zM85 213h2v1h-2zM103 213h1v1h-1zM84 214h1v1h-1zM104 214h1v1h-1zM82 215h2v1h-2zM104 215h1v1h-1zM80 216h2v1h-2zM105 216h1v1h-1zM78 217h2v1h-2zM106 217h1v1h-1zM76 218h2v1h-2zM107 218h1v1h-1zM73 219h3v1h-3zM107 219h1v1h-1zM71 220h2v1h-2zM108 220h1v1h-1zM69 221h2v1h-2zM109 221h1v1h-1zM68 222h1v1h-1zM110 222h1v1h-1zM66 223h2v1h-2zM110 223h1v1h-1zM64 224h2v1h-2zM111 224h1v1h-1zM63 225h1v1h-1zM112 225h1v1h-1zM62 226h1v1h-1zM112 226h1v1h-1zM60 227h2v1h-2zM113 227h1v1h-1zM59 228h1v1h-1zM114 228h1v1h-1zM58 229h1v1h-1zM114 229h1v1h-1zM56 230h2v1h-2zM115 230h1v1h-1zM55 231h1v1h-1zM116 231h1v1h-1zM53 232h2v1h-2zM116 232h1v1h-1zM51 233h2v1h-2zM117 233h1v1h-1zM39 234h5v1h-5zM49 234h2v1h-2zM118 234h1v1h-1zM37 235h2v1h-2zM44 235h5v1h-5zM118 235h1v1h-1zM35 236h2v1h-2zM119 236h1v1h-1zM33 237h2v1h-2zM120 237h1v1h-1zM31 238h2v1h-2zM121 238h1v1h-1zM30 239h1v1h-1zM122 239h2v1h-2zM29 240h1v1h-1zM124 240h1v1h-1zM29 241h1v1h-1zM125 241h1v1h-1zM28 242h1v1h-1zM126 242h1v1h-1zM175 242h1v1h-1zM27 243h1v1h-1zM127 243h1v1h-1zM174 243h1v1h-1zM26 244h1v1h-1zM128 244h2v1h-2zM172 244h2v1h-2zM25 245h1v1h-1zM130 245h2v1h-2zM171 245h1v1h-1zM25 246h1v1h-1zM132 246h1v1h-1zM170 246h1v1h-1zM24 247h1v1h-1zM133 247h2v1h-2zM168 247h2v1h-2zM23 248h1v1h-1zM135 248h3v1h-3zM167 248h1v1h-1zM22 249h1v1h-1zM138 249h4v1h-4zM165 249h2v1h-2zM22 250h1v1h-1zM142 250h12v1h-12zM163 250h2v1h-2zM21 251h1v1h-1zM154 251h4v1h-4zM161 251h2v1h-2zM21 252h1v1h-1zM158 252h3v1h-3zM20 253h1v1h-1zM20 254h1v1h-1zM19 255h1v1h-1zM19 256h1v1h-1zM18 257h1v1h-1zM18 258h1v1h-1zM17 259h1v1h-1zM17 260h1v1h-1zM16 261h1v1h-1zM16 262h1v1h-1zM15 263h1v1h-1zM0 264h1v1h-1zM13 264h2v1h-2zM1 265h2v1h-2zM12 265h1v1h-1zM3 266h2v1h-2zM10 266h2v1h-2zM5 267h2v1h-2zM8 267h2v1h-2zM7 268h1v1h-1z" fill="#ff0000"/>
<path d="M639 220h17v1h-17zM638 221h1v1h-1zM656 221h1v1h-1zM637 222h1v1h-1zM656 222h1v1h-1zM636 223h1v1h-1zM657 223h1v1h-1zM634 224h2v1h-2zM658 224h1v1h-1zM633 225h1v1h-1zM658 225h1v1h-1zM632 226h1v1h-1zM659 226h1v1h-1zM631 227h1v1h-1zM660 227h1v1h-1zM630 228h1v1h-1zM660 228h1v1h-1zM629 229h1v1h-1zM661 229h1v1h-1zM695 229h3v1h-3zM628 230h1v1h-1zM662 230h1v1h-1zM695 230h1v1h-1zM698 230h4v1h-4zM627 231h1v1h-1zM662 231h1v1h-1zM694 231h1v1h-1zM702 231h11v1h-11zM627 232h1v1h-1zM663 232h1v1h-1zM694 232h1v1h-1zM713 232h2v1h-2zM626 233h1v1h-1zM664 233h1v1h-1zM694 233h1v1h-1zM715 233h2v1h-2zM625 234h1v1h-1zM664 234h1v1h-1zM693 234h1v1h-1zM624 235h1v1h-1zM665 235h1v1h-1zM693 235h1v1h-1zM623 236h1v1h-1zM665 236h1v1h-1zM693 236h1v1h-1zM666 237h1v1h-1zM692 237h1v1h-1zM667 238h1v1h-1zM692 238h1v1h-1zM667 239h1v1h-1zM692 239h1v1h-1zM668 240h1v1h-1zM691 240h1v1h-1zM669 241h1v1h-1zM691 241h1v1h-1zM669 242h1v1h-1zM691 242h1v1h-1zM670 243h1v1h-1zM691 243h1v1h-1zM670 244h1v1h-1zM690 244h1v1h-1zM671 245h1v1h-1zM690 245h1v1h-1zM672 246h1v1h-1zM690 246h1v1h-1zM672 247h1v1h-1zM689 247h1v1h-1zM673 248h1v1h-1zM689 248h1v1h-1zM673 249h1v1h-1zM689 249h1v1h-1zM674 250h1v1h-1zM688 250h1v1h-1zM674 251h1v1h-1zM688 251h1v1h-1zM675 252h1v1h-1zM688 252h1v1h-1zM675 253h1v1h-1zM687 253h1v1h-1zM676 254h1v1h-1zM687 254h1v1h-1zM676 255h1v1h-1zM686 255h1v1h-1zM677 256h1v1h-1zM684 256h2v1h-2zM677 257h1v1h-1zM683 257h1v1h-1zM678 258h1v1h-1zM682 258h1v1h-1zM678 259h1v1h-1zM680 259h2v1h-2zM679 260h1v1h-1z" fill="#008c00"/>
<path d="M655 220h2v1h-2zM653 221h2v1h-2zM657 221h3v1h-3zM651 222h2v1h-2zM660 222h2v1h-2zM649 223h2v1h-2zM662 223h2v1h-2zM647 224h2v1h-2zM664 224h1v1h-1zM645 225h2v1h-2zM665 225h1v1h-1zM643 226h2v1h-2zM666 226h1v1h-1zM641 227h2v1h-2zM667 227h1v1h-1zM639 228h2v1h-2zM667 228h1v1h-1zM638 229h1v1h-1zM668 229h1v1h-1zM637 230h1v1h-1zM669 230h1v1h-1zM711 230h2v1h-2zM636 231h1v1h-1zM670 231h1v1h-1zM710 231h1v1h-1zM713 231h2v1h-2zM635 232h1v1h-1zM671 232h1v1h-1zM709 232h1v1h-1zM715 232h2v1h-2zM635 233h1v1h-1zM672 233h1v1h-1zM708 233h1v1h-1zM634 234h1v1h-1zM672 234h1v1h-1zM707 234h1v1h-1zM633 235h1v1h-1zM673 235h1v1h-1zM707 235h1v1h-1zM632 236h1v1h-1zM673 236h1v1h-1zM706 236h1v1h-1zM631 237h1v1h-1zM674 237h1v1h-1zM705 237h1v1h-1zM630 238h1v1h-1zM675 238h1v1h-1zM704 238h1v1h-1zM629 239h1v1h-1zM675 239h1v1h-1zM703 239h1v1h-1zM628 240h1v1h-1zM676 240h1v1h-1zM702 240h1v1h-1zM627 241h1v1h-1zM677 241h1v1h-1zM701 241h1v1h-1zM627 242h1v1h-1zM677 242h1v1h-1zM700 242h1v1h-1zM626 243h1v1h-1zM678 243h1v1h-1zM699 243h1v1h-1zM625 244h1v1h-1zM678 244h1v1h-1zM699 244h1v1h-1zM624 245h1v1h-1zM679 245h1v1h-1zM698 245h1v1h-1zM623 246h1v1h-1zM680 246h1v1h-1zM697 246h1v1h-1zM681 247h1v1h-1zM696 247h1v1h-1zM682 248h2v1h-2zM695 248h1v1h-1zM684 249h1v1h-1zM693 249h2v1h-2zM685 250h1v1h-1zM691 250h2v1h-2zM686 251h1v1h-1zM689 251h2v1h-2zM687 252h2v1h-2z" fill="#ff0000"/>
<rect x="7" y="328" width="1" height="14" fill="#ff0000"/>
<rect x="15" y="332" width="1" height="10" fill="#ff0000"/>
<rect x="23" y="335" width="1" height="7" fill="#ff0000"/>
<rect x="31" y="338" width="1" height="4" fill="#ff0000"/>
<rect x="39" y="339" width="1" height="3" fill="#ff0000"/>
<rect x="47" y="337" width="1" height="5" fill="#009400"/>
<rect x="55" y="337" width="1" height="5" fill="#009400"/>
<rect x="63" y="338" width="1" height="4" fill="#ff0000"/>
<rect x="71" y="337" width="1" height="5" fill="#009400"/>
<rect x="79" y="334" width="1" height="8" fill="#009400"/>
<rect x="87" y="332" width="1" height="10" fill="#009400"/>
<rect x="95" y="331" width="1" height="11" fill="#009400"/>
<rect x="103" y="331" width="1" height="11" fill="#009400"/>
<rect x="111" y="331" width="1" height="11" fill="#009400"/>
<rect x="119" y="331" width="1" height="11" fill="#ff0000"/>
<rect x="127" y="334" width="1" height="8" fill="#ff0000"/>
<rect x="135" y="337" width="1" height="5" fill="#ff0000"/>
<rect x="143" y="338" width="1" height="4" fill="#ff0000"/>
<rect x="151" y="340" width="1" height="2" fill="#ff0000"/>
<rect x="159" y="341" width="1" height="1" fill="#ff0000"/>
<rect x="167" y="340" width="1" height="2" fill="#009400"/>
<rect x="631" y="341" width="1" height="33" fill="#ff0000"/>
<rect x="639" y="341" width="1" height="34" fill="#ff0000"/>
<rect x="647" y="341" width="1" height="32" fill="#009400"/>
<rect x="655" y="341" width="1" height="32" fill="#009400"/>
<rect x="663" y="341" width="1" height="28" fill="#009400"/>
<rect x="671" y="341" width="1" height="28" fill="#ff0000"/>
<rect x="679" y="341" width="1" height="32" fill="#ff0000"/>
<rect x="687" y="341" width="1" height="29" fill="#009400"/>
<rect x="695" y="341" width="1" height="25" fill="#009400"/>
<rect x="703" y="341" width="1" height="23" fill="#009400"/>
<rect x="711" y="341" width="1" height="21" fill="#009400"/>
<path d="M271 385h2v1h-2zM271 386h1v1h-1zM273 386h3v1h-3zM271 387h1v1h-1zM276 387h2v1h-2zM270 388h1v1h-1zM278 388h2v1h-2zM270 389h1v1h-1zM280 389h1v1h-1zM270 390h1v1h-1zM280 390h1v1h-1zM270 391h1v1h-1zM281 391h1v1h-1zM269 392h1v1h-1zM282 392h1v1h-1zM269 393h1v1h-1zM282 393h1v1h-1zM269 394h1v1h-1zM283 394h1v1h-1zM269 395h1v1h-1zM284 395h1v1h-1zM268 396h1v1h-1zM284 396h1v1h-1zM268 397h1v1h-1zM285 397h1v1h-1zM268 398h1v1h-1zM286 398h1v1h-1zM268 399h1v1h-1zM286 399h1v1h-1zM267 400h1v1h-1zM287 400h1v1h-1zM267 401h1v1h-1zM287 401h1v1h-1zM267 402h1v1h-1zM288 402h1v1h-1zM267 403h1v1h-1zM288 403h1v1h-1zM267 404h1v1h-1zM289 404h1v1h-1zM266 405h1v1h-1zM289 405h1v1h-1zM266 406h1v1h-1zM290 406h1v1h-1zM716 406h1v1h-1zM266 407h1v1h-1zM290 407h1v1h-1zM716 407h1v1h-1zM266 408h1v1h-1zM291 408h1v1h-1zM715 408h1v1h-1zM265 409h1v1h-1zM291 409h1v1h-1zM714 409h1v1h-1zM265 410h1v1h-1zM292 410h1v1h-1zM714 410h1v1h-1zM265 411h1v1h-1zM292 411h1v1h-1zM713 411h1v1h-1zM265 412h1v1h-1zM293 412h1v1h-1zM712 412h1v1h-1zM264 413h1v1h-1zM293 413h1v1h-1zM712 413h1v1h-1zM264 414h1v1h-1zM294 414h1v1h-1zM711 414h1v1h-1zM264 415h1v1h-1zM294 415h1v1h-1zM711 415h1v1h-1zM264 416h1v1h-1zM295 416h1v1h-1zM695 416h1v1h-1zM711 416h1v1h-1zM263 417h1v1h-1zM295 417h1v1h-1zM695 417h1v1h-1zM711 417h1v1h-1zM263 418h1v1h-1zM295 418h1v1h-1zM695 418h1v1h-1zM710 418h1v1h-1zM263 419h1v1h-1zM296 419h1v1h-1zM694 419h2v1h-2zM710 419h1v1h-1zM262 420h1v1h-1zM296 420h1v1h-1zM694 420h1v1h-1zM696 420h1v1h-1zM710 420h1v1h-1zM261 421h1v1h-1zM297 421h1v1h-1zM694 421h1v1h-1zM696 421h1v1h-1zM710 421h1v1h-1zM261 422h1v1h-1zM297 422h1v1h-1zM694 422h1v1h-1zM696 422h1v1h-1zM710 422h1v1h-1zM214 423h3v1h-3zM231 423h2v1h-2zM260 423h1v1h-1zM298 423h1v1h-1zM693 423h1v1h-1zM696 423h1v1h-1zM710 423h1v1h-1zM210 424h4v1h-4zM217 424h2v1h-2zM229 424h2v1h-2zM233 424h3v1h-3zM259 424h1v1h-1zM298 424h1v1h-1zM693 424h1v1h-1zM696 424h1v1h-1zM710 424h1v1h-1zM207 425h3v1h-3zM219 425h2v1h-2zM227 425h2v1h-2zM236 425h2v1h-2zM258 425h1v1h-1zM299 425h1v1h-1zM463 425h5v1h-5zM693 425h1v1h-1zM696 425h1v1h-1zM709 425h1v1h-1zM205 426h2v1h-2zM221 426h2v1h-2zM225 426h2v1h-2zM238 426h3v1h-3zM257 426h1v1h-1zM299 426h1v1h-1zM462 426h1v1h-1zM468 426h6v1h-6zM693 426h1v1h-1zM697 426h1v1h-1zM709 426h1v1h-1zM204 427h1v1h-1zM223 427h2v1h-2zM241 427h3v1h-3zM257 427h1v1h-1zM300 427h1v1h-1zM461 427h1v1h-1zM474 427h4v1h-4zM693 427h1v1h-1zM697 427h1v1h-1zM709 427h1v1h-1zM188 428h6v1h-6zM202 428h2v1h-2zM244 428h2v1h-2zM256 428h1v1h-1zM300 428h1v1h-1zM444 428h4v1h-4zM460 428h1v1h-1zM478 428h3v1h-3zM692 428h1v1h-1zM697 428h1v1h-1zM709 428h1v1h-1zM182 429h6v1h-6zM194 429h4v1h-4zM200 429h2v1h-2zM246 429h10v1h-10zM301 429h1v1h-1zM439 429h5v1h-5zM448 429h2v1h-2zM459 429h1v1h-1zM481 429h2v1h-2zM692 429h1v1h-1zM697 429h1v1h-1zM709 429h1v1h-1zM180 430h2v1h-2zM198 430h2v1h-2zM301 430h1v1h-1zM438 430h1v1h-1zM450 430h2v1h-2zM458 430h1v1h-1zM483 430h2v1h-2zM692 430h1v1h-1zM697 430h1v1h-1zM709 430h1v1h-1zM111 431h2v1h-2zM177 431h3v1h-3zM302 431h1v1h-1zM437 431h1v1h-1zM452 431h1v1h-1zM457 431h1v1h-1zM485 431h2v1h-2zM692 431h1v1h-1zM697 431h1v1h-1zM708 431h1v1h-1zM6 432h3v1h-3zM110 432h1v1h-1zM113 432h3v1h-3zM174 432h3v1h-3zM302 432h1v1h-1zM310 432h6v1h-6zM437 432h1v1h-1zM453 432h2v1h-2zM456 432h1v1h-1zM487 432h1v1h-1zM692 432h1v1h-1zM697 432h1v1h-1zM708 432h1v1h-1zM4 433h2v1h-2zM9 433h3v1h-3zM108 433h2v1h-2zM116 433h2v1h-2zM135 433h13v1h-13zM170 433h4v1h-4zM303 433h1v1h-1zM306 433h4v1h-4zM316 433h4v1h-4zM415 433h1v1h-1zM436 433h1v1h-1zM455 433h1v1h-1zM488 433h1v1h-1zM691 433h1v1h-1zM698 433h1v1h-1zM708 433h1v1h-1zM1 434h3v1h-3zM12 434h2v1h-2zM20 434h6v1h-6zM107 434h1v1h-1zM118 434h3v1h-3zM133 434h2v1h-2zM148 434h6v1h-6zM166 434h4v1h-4zM303 434h3v1h-3zM319 434h1v1h-1zM414 434h1v1h-1zM416 434h2v1h-2zM435 434h1v1h-1zM489 434h1v1h-1zM691 434h1v1h-1zM698 434h1v1h-1zM708 434h1v1h-1zM0 435h1v1h-1zM14 435h6v1h-6zM26 435h4v1h-4zM106 435h1v1h-1zM121 435h2v1h-2zM132 435h1v1h-1zM154 435h4v1h-4zM162 435h4v1h-4zM320 435h1v1h-1zM414 435h1v1h-1zM418 435h1v1h-1zM434 435h1v1h-1zM490 435h2v1h-2zM691 435h1v1h-1zM698 435h1v1h-1zM708 435h1v1h-1zM30 436h6v1h-6zM92 436h8v1h-8zM104 436h2v1h-2zM123 436h2v1h-2zM130 436h2v1h-2zM158 436h4v1h-4zM320 436h1v1h-1zM343 436h1v1h-1zM413 436h1v1h-1zM419 436h1v1h-1zM433 436h1v1h-1zM492 436h1v1h-1zM691 436h1v1h-1zM698 436h1v1h-1zM708 436h1v1h-1zM36 437h4v1h-4zM78 437h14v1h-14zM100 437h4v1h-4zM125 437h2v1h-2zM128 437h2v1h-2zM321 437h1v1h-1zM341 437h2v1h-2zM344 437h1v1h-1zM413 437h1v1h-1zM420 437h2v1h-2zM433 437h1v1h-1zM493 437h1v1h-1zM690 437h1v1h-1zM698 437h1v1h-1zM708 437h1v1h-1zM40 438h2v1h-2zM76 438h2v1h-2zM127 438h1v1h-1zM321 438h1v1h-1zM339 438h2v1h-2zM345 438h1v1h-1zM412 438h1v1h-1zM422 438h1v1h-1zM432 438h1v1h-1zM494 438h1v1h-1zM690 438h1v1h-1zM698 438h1v1h-1zM707 438h1v1h-1zM42 439h1v1h-1zM73 439h3v1h-3zM322 439h1v1h-1zM337 439h2v1h-2zM346 439h1v1h-1zM411 439h1v1h-1zM423 439h9v1h-9zM495 439h10v1h-10zM690 439h1v1h-1zM699 439h1v1h-1zM707 439h1v1h-1zM43 440h1v1h-1zM71 440h2v1h-2zM322 440h1v1h-1zM335 440h2v1h-2zM347 440h1v1h-1zM411 440h1v1h-1zM505 440h2v1h-2zM532 440h6v1h-6zM690 440h1v1h-1zM699 440h1v1h-1zM707 440h1v1h-1zM44 441h2v1h-2zM54 441h3v1h-3zM69 441h2v1h-2zM322 441h1v1h-1zM334 441h1v1h-1zM347 441h1v1h-1zM367 441h2v1h-2zM410 441h1v1h-1zM507 441h2v1h-2zM518 441h14v1h-14zM538 441h4v1h-4zM690 441h1v1h-1zM699 441h1v1h-1zM707 441h1v1h-1zM46 442h1v1h-1zM50 442h4v1h-4zM57 442h3v1h-3zM67 442h2v1h-2zM323 442h1v1h-1zM334 442h1v1h-1zM348 442h1v1h-1zM366 442h1v1h-1zM369 442h3v1h-3zM409 442h1v1h-1zM509 442h2v1h-2zM514 442h4v1h-4zM542 442h4v1h-4zM689 442h1v1h-1zM699 442h1v1h-1zM707 442h1v1h-1zM47 443h3v1h-3zM60 443h2v1h-2zM65 443h2v1h-2zM323 443h1v1h-1zM333 443h1v1h-1zM349 443h1v1h-1zM364 443h2v1h-2zM372 443h2v1h-2zM409 443h1v1h-1zM511 443h3v1h-3zM546 443h4v1h-4zM689 443h1v1h-1zM699 443h1v1h-1zM707 443h1v1h-1zM62 444h3v1h-3zM324 444h1v1h-1zM332 444h1v1h-1zM350 444h1v1h-1zM363 444h1v1h-1zM374 444h2v1h-2zM396 444h6v1h-6zM408 444h1v1h-1zM550 444h2v1h-2zM655 444h2v1h-2zM689 444h1v1h-1zM699 444h1v1h-1zM707 444h1v1h-1zM324 445h1v1h-1zM332 445h1v1h-1zM351 445h3v1h-3zM362 445h1v1h-1zM376 445h1v1h-1zM391 445h5v1h-5zM402 445h4v1h-4zM408 445h1v1h-1zM552 445h2v1h-2zM631 445h2v1h-2zM654 445h1v1h-1zM657 445h3v1h-3zM689 445h1v1h-1zM699 445h1v1h-1zM706 445h1v1h-1zM324 446h1v1h-1zM331 446h1v1h-1zM354 446h4v1h-4zM360 446h2v1h-2zM377 446h1v1h-1zM390 446h1v1h-1zM406 446h2v1h-2zM554 446h1v1h-1zM630 446h1v1h-1zM633 446h3v1h-3zM653 446h1v1h-1zM660 446h2v1h-2zM689 446h1v1h-1zM700 446h1v1h-1zM706 446h1v1h-1zM325 447h1v1h-1zM330 447h1v1h-1zM358 447h2v1h-2zM378 447h1v1h-1zM389 447h1v1h-1zM555 447h1v1h-1zM583 447h1v1h-1zM629 447h1v1h-1zM636 447h2v1h-2zM652 447h1v1h-1zM662 447h2v1h-2zM688 447h1v1h-1zM700 447h1v1h-1zM706 447h1v1h-1zM325 448h1v1h-1zM330 448h1v1h-1zM379 448h1v1h-1zM388 448h1v1h-1zM556 448h2v1h-2zM582 448h1v1h-1zM584 448h1v1h-1zM628 448h1v1h-1zM638 448h3v1h-3zM651 448h1v1h-1zM664 448h1v1h-1zM688 448h1v1h-1zM700 448h1v1h-1zM706 448h1v1h-1zM326 449h1v1h-1zM329 449h1v1h-1zM380 449h1v1h-1zM386 449h2v1h-2zM558 449h1v1h-1zM581 449h1v1h-1zM584 449h1v1h-1zM626 449h2v1h-2zM641 449h2v1h-2zM650 449h1v1h-1zM664 449h1v1h-1zM688 449h1v1h-1zM700 449h1v1h-1zM706 449h1v1h-1zM326 450h1v1h-1zM328 450h1v1h-1zM381 450h1v1h-1zM385 450h1v1h-1zM559 450h1v1h-1zM580 450h1v1h-1zM585 450h1v1h-1zM625 450h1v1h-1zM643 450h2v1h-2zM649 450h1v1h-1zM665 450h1v1h-1zM688 450h1v1h-1zM700 450h1v1h-1zM706 450h1v1h-1zM327 451h2v1h-2zM382 451h1v1h-1zM384 451h1v1h-1zM560 451h1v1h-1zM578 451h2v1h-2zM586 451h1v1h-1zM624 451h1v1h-1zM645 451h2v1h-2zM648 451h1v1h-1zM666 451h1v1h-1zM687 451h1v1h-1zM700 451h1v1h-1zM706 451h1v1h-1zM327 452h1v1h-1zM383 452h1v1h-1zM561 452h1v1h-1zM577 452h1v1h-1zM586 452h1v1h-1zM623 452h1v1h-1zM647 452h1v1h-1zM666 452h1v1h-1zM687 452h1v1h-1zM701 452h1v1h-1zM705 452h1v1h-1zM562 453h1v1h-1zM576 453h1v1h-1zM587 453h1v1h-1zM621 453h2v1h-2zM667 453h1v1h-1zM687 453h1v1h-1zM701 453h1v1h-1zM705 453h1v1h-1zM563 454h1v1h-1zM575 454h1v1h-1zM588 454h1v1h-1zM599 454h1v1h-1zM620 454h1v1h-1zM668 454h1v1h-1zM687 454h1v1h-1zM701 454h1v1h-1zM705 454h1v1h-1zM563 455h1v1h-1zM573 455h2v1h-2zM588 455h1v1h-1zM597 455h2v1h-2zM600 455h1v1h-1zM618 455h2v1h-2zM668 455h1v1h-1zM686 455h1v1h-1zM701 455h1v1h-1zM705 455h1v1h-1zM564 456h1v1h-1zM572 456h1v1h-1zM589 456h1v1h-1zM596 456h1v1h-1zM600 456h1v1h-1zM616 456h2v1h-2zM669 456h1v1h-1zM686 456h1v1h-1zM701 456h1v1h-1zM705 456h1v1h-1zM565 457h1v1h-1zM570 457h2v1h-2zM590 457h1v1h-1zM594 457h2v1h-2zM601 457h1v1h-1zM615 457h1v1h-1zM670 457h1v1h-1zM685 457h1v1h-1zM701 457h1v1h-1zM705 457h1v1h-1zM566 458h1v1h-1zM568 458h2v1h-2zM590 458h1v1h-1zM592 458h2v1h-2zM601 458h1v1h-1zM614 458h1v1h-1zM670 458h1v1h-1zM685 458h1v1h-1zM701 458h1v1h-1zM704 458h1v1h-1zM567 459h1v1h-1zM591 459h1v1h-1zM602 459h1v1h-1zM613 459h1v1h-1zM671 459h1v1h-1zM684 459h1v1h-1zM702 459h1v1h-1zM704 459h1v1h-1zM603 460h1v1h-1zM613 460h1v1h-1zM672 460h1v1h-1zM684 460h1v1h-1zM702 460h1v1h-1zM704 460h1v1h-1zM603 461h1v1h-1zM612 461h1v1h-1zM672 461h1v1h-1zM683 461h1v1h-1zM702 461h1v1h-1zM704 461h1v1h-1zM604 462h1v1h-1zM611 462h1v1h-1zM673 462h1v1h-1zM683 462h1v1h-1zM702 462h1v1h-1zM704 462h1v1h-1zM605 463h1v1h-1zM610 463h1v1h-1zM674 463h1v1h-1zM682 463h1v1h-1zM702 463h1v1h-1zM704 463h1v1h-1zM605 464h1v1h-1zM609 464h1v1h-1zM675 464h1v1h-1zM682 464h1v1h-1zM702 464h1v1h-1zM704 464h1v1h-1zM606 465h1v1h-1zM609 465h1v1h-1zM675 465h1v1h-1zM681 465h1v1h-1zM703 465h1v1h-1zM606 466h1v1h-1zM608 466h1v1h-1zM676 466h1v1h-1zM681 466h1v1h-1zM703 466h1v1h-1zM607 467h1v1h-1zM677 467h1v1h-1zM680 467h1v1h-1zM703 467h1v1h-1zM678 468h1v1h-1zM680 468h1v1h-1zM703 468h1v1h-1zM678 469h2v1h-2zM679 470h1v1h-1z" fill="#20b2aa"/>
<path d="M278 499h2v1h-2zM274 500h4v1h-4zM280 500h1v1h-1zM271 501h3v1h-3zM281 501h1v1h-1zM270 502h1v1h-1zM282 502h1v1h-1zM268 503h2v1h-2zM283 503h1v1h-1zM267 504h1v1h-1zM284 504h1v1h-1zM266 505h1v1h-1zM285 505h1v1h-1zM264 506h2v1h-2zM286 506h1v1h-1zM214 507h3v1h-3zM246 507h2v1h-2zM263 507h1v1h-1zM287 507h1v1h-1zM191 508h2v1h-2zM212 508h2v1h-2zM217 508h2v1h-2zM244 508h2v1h-2zM248 508h2v1h-2zM261 508h2v1h-2zM288 508h2v1h-2zM190 509h1v1h-1zM193 509h3v1h-3zM209 509h3v1h-3zM219 509h2v1h-2zM241 509h3v1h-3zM250 509h2v1h-2zM260 509h1v1h-1zM290 509h2v1h-2zM188 510h2v1h-2zM196 510h2v1h-2zM204 510h5v1h-5zM221 510h2v1h-2zM228 510h13v1h-13zM252 510h1v1h-1zM258 510h2v1h-2zM292 510h1v1h-1zM187 511h1v1h-1zM198 511h6v1h-6zM223 511h5v1h-5zM253 511h2v1h-2zM256 511h2v1h-2zM293 511h2v1h-2zM186 512h1v1h-1zM255 512h1v1h-1zM295 512h2v1h-2zM184 513h2v1h-2zM297 513h2v1h-2zM79 514h11v1h-11zM183 514h1v1h-1zM299 514h2v1h-2zM415 514h1v1h-1zM695 514h1v1h-1zM78 515h1v1h-1zM90 515h4v1h-4zM181 515h2v1h-2zM301 515h2v1h-2zM414 515h1v1h-1zM416 515h1v1h-1zM694 515h1v1h-1zM696 515h1v1h-1zM76 516h2v1h-2zM94 516h2v1h-2zM180 516h1v1h-1zM303 516h2v1h-2zM413 516h1v1h-1zM417 516h1v1h-1zM462 516h3v1h-3zM694 516h1v1h-1zM696 516h1v1h-1zM75 517h1v1h-1zM96 517h1v1h-1zM111 517h2v1h-2zM178 517h2v1h-2zM305 517h2v1h-2zM412 517h1v1h-1zM418 517h1v1h-1zM458 517h4v1h-4zM465 517h3v1h-3zM693 517h1v1h-1zM697 517h1v1h-1zM74 518h1v1h-1zM97 518h1v1h-1zM110 518h1v1h-1zM113 518h3v1h-3zM135 518h1v1h-1zM166 518h6v1h-6zM176 518h2v1h-2zM307 518h2v1h-2zM410 518h2v1h-2zM419 518h1v1h-1zM452 518h6v1h-6zM468 518h2v1h-2zM693 518h1v1h-1zM697 518h1v1h-1zM14 519h4v1h-4zM52 519h5v1h-5zM72 519h2v1h-2zM98 519h2v1h-2zM108 519h2v1h-2zM116 519h2v1h-2zM133 519h2v1h-2zM136 519h2v1h-2zM162 519h4v1h-4zM172 519h4v1h-4zM309 519h2v1h-2zM316 519h4v1h-4zM398 519h4v1h-4zM409 519h1v1h-1zM420 519h1v1h-1zM446 519h6v1h-6zM470 519h4v1h-4zM486 519h2v1h-2zM692 519h1v1h-1zM698 519h1v1h-1zM716 519h1v1h-1zM12 520h2v1h-2zM18 520h4v1h-4zM46 520h6v1h-6zM57 520h3v1h-3zM70 520h2v1h-2zM100 520h1v1h-1zM107 520h1v1h-1zM118 520h3v1h-3zM132 520h1v1h-1zM138 520h2v1h-2zM158 520h4v1h-4zM311 520h5v1h-5zM320 520h1v1h-1zM394 520h4v1h-4zM402 520h4v1h-4zM408 520h1v1h-1zM421 520h1v1h-1zM444 520h2v1h-2zM474 520h4v1h-4zM482 520h4v1h-4zM488 520h1v1h-1zM692 520h1v1h-1zM699 520h1v1h-1zM713 520h3v1h-3zM9 521h3v1h-3zM22 521h2v1h-2zM44 521h2v1h-2zM60 521h2v1h-2zM66 521h4v1h-4zM101 521h1v1h-1zM106 521h1v1h-1zM121 521h3v1h-3zM130 521h2v1h-2zM140 521h1v1h-1zM156 521h2v1h-2zM320 521h1v1h-1zM343 521h1v1h-1zM375 521h5v1h-5zM388 521h6v1h-6zM406 521h2v1h-2zM422 521h1v1h-1zM441 521h3v1h-3zM478 521h4v1h-4zM489 521h1v1h-1zM691 521h1v1h-1zM699 521h1v1h-1zM711 521h2v1h-2zM7 522h2v1h-2zM24 522h2v1h-2zM41 522h3v1h-3zM62 522h4v1h-4zM102 522h1v1h-1zM104 522h2v1h-2zM124 522h2v1h-2zM128 522h2v1h-2zM141 522h2v1h-2zM153 522h3v1h-3zM321 522h1v1h-1zM341 522h2v1h-2zM344 522h1v1h-1zM373 522h2v1h-2zM380 522h8v1h-8zM423 522h18v1h-18zM490 522h2v1h-2zM690 522h1v1h-1zM700 522h1v1h-1zM710 522h1v1h-1zM5 523h2v1h-2zM26 523h2v1h-2zM38 523h3v1h-3zM103 523h1v1h-1zM126 523h2v1h-2zM143 523h10v1h-10zM322 523h1v1h-1zM340 523h1v1h-1zM345 523h1v1h-1zM372 523h1v1h-1zM492 523h1v1h-1zM690 523h1v1h-1zM701 523h1v1h-1zM708 523h2v1h-2zM3 524h2v1h-2zM28 524h1v1h-1zM36 524h2v1h-2zM323 524h1v1h-1zM338 524h2v1h-2zM346 524h2v1h-2zM370 524h2v1h-2zM493 524h1v1h-1zM689 524h1v1h-1zM701 524h1v1h-1zM707 524h1v1h-1zM1 525h2v1h-2zM29 525h2v1h-2zM33 525h3v1h-3zM323 525h1v1h-1zM336 525h2v1h-2zM348 525h1v1h-1zM368 525h2v1h-2zM494 525h1v1h-1zM689 525h1v1h-1zM702 525h1v1h-1zM706 525h1v1h-1zM0 526h1v1h-1zM31 526h2v1h-2zM324 526h1v1h-1zM335 526h1v1h-1zM349 526h1v1h-1zM358 526h10v1h-10zM495 526h5v1h-5zM526 526h4v1h-4zM688 526h1v1h-1zM702 526h1v1h-1zM704 526h2v1h-2zM325 527h1v1h-1zM333 527h2v1h-2zM350 527h1v1h-1zM354 527h4v1h-4zM500 527h16v1h-16zM522 527h4v1h-4zM530 527h4v1h-4zM580 527h4v1h-4zM688 527h1v1h-1zM703 527h1v1h-1zM326 528h1v1h-1zM331 528h2v1h-2zM351 528h3v1h-3zM516 528h6v1h-6zM534 528h4v1h-4zM574 528h6v1h-6zM584 528h2v1h-2zM655 528h3v1h-3zM687 528h1v1h-1zM326 529h1v1h-1zM329 529h2v1h-2zM538 529h4v1h-4zM572 529h2v1h-2zM586 529h1v1h-1zM654 529h1v1h-1zM658 529h4v1h-4zM686 529h1v1h-1zM327 530h2v1h-2zM542 530h4v1h-4zM569 530h3v1h-3zM587 530h1v1h-1zM653 530h1v1h-1zM662 530h2v1h-2zM685 530h1v1h-1zM546 531h4v1h-4zM567 531h2v1h-2zM588 531h2v1h-2zM652 531h1v1h-1zM664 531h1v1h-1zM684 531h1v1h-1zM550 532h3v1h-3zM565 532h2v1h-2zM590 532h1v1h-1zM628 532h8v1h-8zM651 532h1v1h-1zM665 532h1v1h-1zM683 532h1v1h-1zM553 533h3v1h-3zM563 533h2v1h-2zM591 533h5v1h-5zM615 533h13v1h-13zM636 533h5v1h-5zM650 533h1v1h-1zM666 533h2v1h-2zM683 533h1v1h-1zM556 534h2v1h-2zM561 534h2v1h-2zM596 534h5v1h-5zM613 534h2v1h-2zM641 534h3v1h-3zM649 534h1v1h-1zM668 534h1v1h-1zM682 534h1v1h-1zM558 535h3v1h-3zM601 535h3v1h-3zM611 535h2v1h-2zM644 535h2v1h-2zM648 535h1v1h-1zM669 535h1v1h-1zM681 535h1v1h-1zM604 536h2v1h-2zM609 536h2v1h-2zM646 536h2v1h-2zM670 536h1v1h-1zM680 536h1v1h-1zM606 537h3v1h-3zM671 537h9v1h-9z" fill="#1e90ff"/>
</svg>
<div class="a" style="left:174px;top:157px;width:456px;height:253px;border-radius:7px;background:#000;"></div>
<div class="a" style="left:175px;top:158px;width:454px;height:251px;border-radius:6px;border:1px solid #a4a4a4;background:linear-gradient(to bottom,#2e2e30 0,#28282a 12px,#222224 27px,#161618 40px,#121214 80px,#0a0a0c 100%);overflow:hidden;"><div class="a" style="left:-10px;top:4px;width:110px;height:18px;background:#77777b;filter:blur(6px);border-radius:9px"></div><div class="a" style="left:0;top:0;width:452px;height:1px;background:rgba(255,255,255,.10)"></div><div class="a" style="left:0px;top:24px;width:4px;height:20px;background:linear-gradient(to bottom,rgba(96,102,110,0),rgba(96,102,110,.95) 50%,rgba(96,102,110,0))"></div><div class="a" style="left:0px;top:119px;width:4px;height:20px;background:linear-gradient(to bottom,rgba(96,102,110,0),rgba(96,102,110,.95) 50%,rgba(96,102,110,0))"></div><div class="a" style="left:0px;top:214px;width:4px;height:20px;background:linear-gradient(to bottom,rgba(96,102,110,0),rgba(96,102,110,.95) 50%,rgba(96,102,110,0))"></div><div class="a" style="left:448px;top:24px;width:4px;height:20px;background:linear-gradient(to bottom,rgba(96,102,110,0),rgba(96,102,110,.95) 50%,rgba(96,102,110,0))"></div><div class="a" style="left:448px;top:119px;width:4px;height:20px;background:linear-gradient(to bottom,rgba(96,102,110,0),rgba(96,102,110,.95) 50%,rgba(96,102,110,0))"></div><div class="a" style="left:448px;top:214px;width:4px;height:20px;background:linear-gradient(to bottom,rgba(96,102,110,0),rgba(96,102,110,.95) 50%,rgba(96,102,110,0))"></div></div>
<div class="a" style="left:546px;top:159px;width:78px;height:19px;border:1px solid #9a9a9a;border-top:none;border-radius:0 0 5px 5px;background:#0c0c0c"></div>
<div class="a" style="left:548px;top:159px;width:74px;height:17px;border:1px solid #8c8c8c;border-top:none;border-radius:0 0 3px 3px;background:linear-gradient(to bottom,#363638,#2c2c2e 50%,#202022 51%,#28282a)"></div>
<div class="a" style="left:574px;top:159px;width:1px;height:17px;background:#8c8c8c"></div>
<div class="a" style="left:575px;top:159px;width:1px;height:17px;background:#0c0c0c"></div>
<div class="a" style="left:576px;top:159px;width:1px;height:17px;background:#8c8c8c"></div>
<div class="a" style="left:602px;top:159px;width:13px;height:17px;background:radial-gradient(ellipse 6px 11px at 50% 45%,rgba(0,140,0,.22),rgba(0,140,0,0));"></div>
<div class="a" style="left:612px;top:160px;width:16px;height:23px;background:radial-gradient(ellipse at 60% 50%,rgba(150,20,20,.22),rgba(150,20,20,0) 70%);"></div>
<div class="a" style="left:180px;top:185px;width:444px;height:219px;border:1px solid #c4c4c4;border-radius:2px;background:#1c1c1c"></div>
<div class="a" style="left:182px;top:187px;width:440px;height:215px;background:#f0f0f0;border:1px solid #fff;"></div>
<div class="a" style="left:188px;top:214px;width:426px;height:151px;background:#fff;border:1px solid #898c95;"></div>
<div class="tab" style="left:257px;top:196px;width:41px;height:18px;"></div>
<div class="tab" style="left:297px;top:196px;width:70px;height:18px;"></div>
<div class="tab" style="left:188px;top:194px;width:69px;height:22px;background:#fff;box-shadow:none"></div>
<div class="inp" style="left:417px;top:232px;width:60px;height:20px;"></div>
<div class="inp" style="left:545px;top:232px;width:60px;height:20px;"></div>
<div class="inp" style="left:417px;top:265px;width:60px;height:20px;"></div>
<div class="btn" style="left:417px;top:297px;width:188px;height:21px;"><div class="a" style="left:175px;top:8px;width:7px;height:1px;background:#000"></div><div class="a" style="left:176px;top:9px;width:5px;height:1px;background:#000"></div><div class="a" style="left:177px;top:10px;width:3px;height:1px;background:#000"></div><div class="a" style="left:178px;top:11px;width:1px;height:1px;background:#000"></div></div>
<div class="inp" style="left:290px;top:330px;width:120px;height:21px;"><div class="a" style="left:3px;top:3px;width:14px;height:13px;background:#3cb371;border:1px solid #8c8c8c"></div><div class="a" style="left:107px;top:8px;width:7px;height:1px;background:#000"></div><div class="a" style="left:108px;top:9px;width:5px;height:1px;background:#000"></div><div class="a" style="left:109px;top:10px;width:3px;height:1px;background:#000"></div><div class="a" style="left:110px;top:11px;width:1px;height:1px;background:#000"></div></div>
<div class="inp" style="left:417px;top:330px;width:90px;height:21px;"><div class="a" style="left:7px;top:9px;width:59px;height:1px;background:#000"></div><div class="a" style="left:77px;top:8px;width:7px;height:1px;background:#000"></div><div class="a" style="left:78px;top:9px;width:5px;height:1px;background:#000"></div><div class="a" style="left:79px;top:10px;width:3px;height:1px;background:#000"></div><div class="a" style="left:80px;top:11px;width:1px;height:1px;background:#000"></div></div>
<div class="inp" style="left:515px;top:330px;width:90px;height:21px;"><div class="a" style="left:7px;top:9px;width:59px;height:1px;background:#000"></div><div class="a" style="left:77px;top:8px;width:7px;height:1px;background:#000"></div><div class="a" style="left:78px;top:9px;width:5px;height:1px;background:#000"></div><div class="a" style="left:79px;top:10px;width:3px;height:1px;background:#000"></div><div class="a" style="left:80px;top:11px;width:1px;height:1px;background:#000"></div></div>
<div class="btn" style="left:380px;top:373px;width:73px;height:21px;"></div>
<div class="btn" style="left:461px;top:373px;width:73px;height:21px;"></div>
<div class="btn" style="left:542px;top:373px;width:73px;height:21px;"></div>
<div class="t" style="left:181.70px;top:162px;font-size:12px;font-weight:400;color:#000;text-shadow:0 0 1px rgba(0,0,0,.55);transform:scaleX(0.9952)">Bollinger Bands</div>
<div class="t" style="left:558.00px;top:158px;font-size:13px;font-weight:700;color:#f4f4f4;transform:scaleX(1.0000)">?</div>
<div class="t" style="left:594.50px;top:157px;font-size:16px;font-weight:700;color:#f4f4f4;transform:scaleX(1.1111)">x</div>
<div class="t" style="left:195.44px;top:194px;font-size:12px;font-weight:400;color:#000;transform:scaleX(0.8557)">Parameters</div>
<div class="t" style="left:260.90px;top:196px;font-size:12px;font-weight:400;color:#000;transform:scaleX(0.9000)">Levels</div>
<div class="t" style="left:304.80px;top:196px;font-size:12px;font-weight:400;color:#000;transform:scaleX(0.8418)">Visualization</div>
<div class="t" style="left:376.62px;top:233px;font-size:12px;font-weight:400;color:#000;transform:scaleX(0.8833)">Period:</div>
<div class="t" style="left:356.69px;top:265px;font-size:12px;font-weight:400;color:#000;transform:scaleX(0.9070)">Deviations:</div>
<div class="t" style="left:369.30px;top:298px;font-size:12px;font-weight:400;color:#000;transform:scaleX(0.8587)">Apply to:</div>
<div class="t" style="left:256.73px;top:330px;font-size:12px;font-weight:400;color:#000;transform:scaleX(0.8714)">Style:</div>
<div class="t" style="left:513.04px;top:233px;font-size:12px;font-weight:400;color:#000;transform:scaleX(0.9600)">Shift:</div>
<div class="t" style="left:419.49px;top:232px;font-size:12px;font-weight:400;color:#000;transform:scaleX(0.9083)">20</div>
<div class="t" style="left:548.50px;top:232px;font-size:12px;font-weight:400;color:#000;transform:scaleX(0.8667)">0</div>
<div class="t" style="left:420.30px;top:264px;font-size:12px;font-weight:400;color:#000;transform:scaleX(0.8438)">0.1</div>
<div class="t" style="left:419.92px;top:298px;font-size:12px;font-weight:400;color:#000;transform:scaleX(0.8793)">Close</div>
<div class="t" style="left:311.92px;top:331px;font-size:12px;font-weight:400;color:#000;transform:scaleX(0.8771)">MediumSeaGre</div>
<div class="t" style="left:408.40px;top:374px;font-size:12px;font-weight:400;color:#000;transform:scaleX(0.9176)">OK</div>
<div class="t" style="left:479.28px;top:374px;font-size:12px;font-weight:400;color:#000;transform:scaleX(0.9194)">Cancel</div>
<div class="t" style="left:563.30px;top:374px;font-size:12px;font-weight:400;color:#000;transform:scaleX(0.9000)">Reset</div>
</body></html>
